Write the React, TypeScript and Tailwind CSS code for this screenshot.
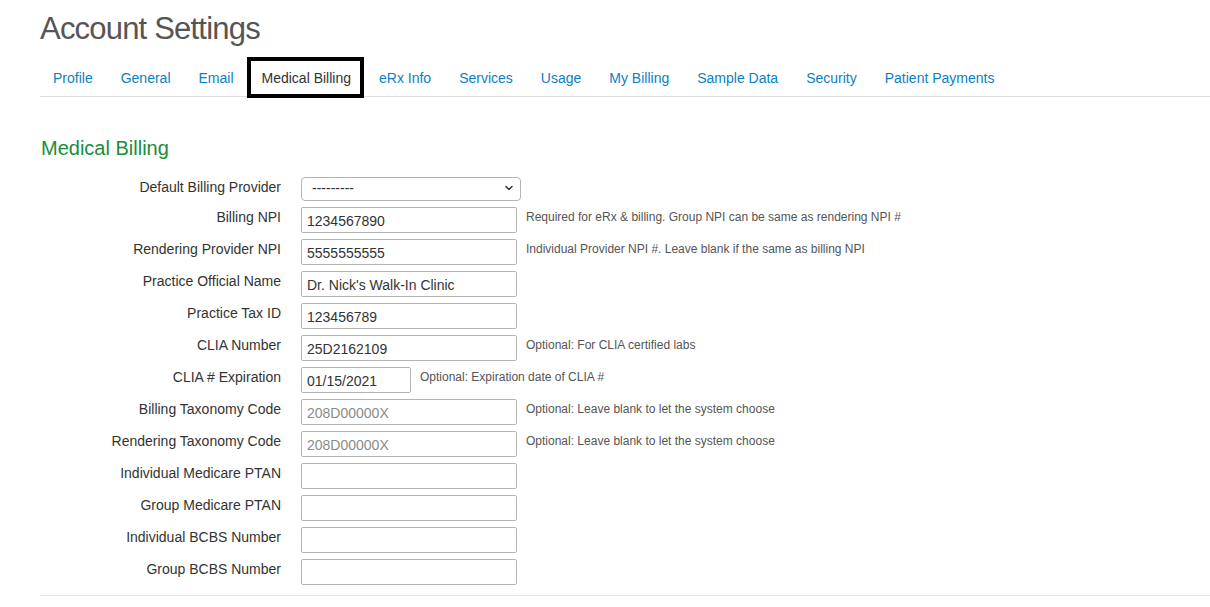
import { ChevronDown } from "lucide-react";

const tabs = [
  "Profile",
  "General",
  "Email",
  "Medical Billing",
  "eRx Info",
  "Services",
  "Usage",
  "My Billing",
  "Sample Data",
  "Security",
  "Patient Payments",
];

type Field = {
  label: string;
  value?: string;
  placeholder?: string;
  help?: string;
  narrow?: boolean;
};

const fields: Field[] = [
  {
    label: "Billing NPI",
    value: "1234567890",
    help: "Required for eRx & billing. Group NPI can be same as rendering NPI #",
  },
  {
    label: "Rendering Provider NPI",
    value: "5555555555",
    help: "Individual Provider NPI #. Leave blank if the same as billing NPI",
  },
  { label: "Practice Official Name", value: "Dr. Nick's Walk-In Clinic" },
  { label: "Practice Tax ID", value: "123456789" },
  { label: "CLIA Number", value: "25D2162109", help: "Optional: For CLIA certified labs" },
  {
    label: "CLIA # Expiration",
    value: "01/15/2021",
    help: "Optional: Expiration date of CLIA #",
    narrow: true,
  },
  {
    label: "Billing Taxonomy Code",
    placeholder: "208D00000X",
    help: "Optional: Leave blank to let the system choose",
  },
  {
    label: "Rendering Taxonomy Code",
    placeholder: "208D00000X",
    help: "Optional: Leave blank to let the system choose",
  },
  { label: "Individual Medicare PTAN" },
  { label: "Group Medicare PTAN" },
  { label: "Individual BCBS Number" },
  { label: "Group BCBS Number" },
];

const FormRow = ({ field }: { field: Field }) => (
  <div className="flex items-start h-[32px]">
    <label className="w-[241px] mr-[20px] text-right text-[14px] leading-[20px] text-[#333]">
      {field.label}
    </label>
    <input
      defaultValue={field.value}
      placeholder={field.placeholder}
      className={`${
        field.narrow ? "w-[110px]" : "w-[216px]"
      } h-[26px] border border-[#b4b4b4] rounded-[2px] px-[5px] pt-[1px] text-[14px] text-[#333] placeholder:text-[#8a8a8a] outline-none bg-white`}
    />
    {field.help && (
      <span className="ml-[9px] pt-[2px] text-[12px] leading-[17px] text-[#555]">
        {field.help}
      </span>
    )}
  </div>
);

export default function App() {
  return (
    <div className="min-h-screen bg-white pl-[40px] font-['Liberation_Sans',Arial,sans-serif]">
      <h1 className="pt-[13px] text-[31px] leading-[31px] tracking-[-0.8px] text-[#555] font-normal">
        Account Settings
      </h1>

      <ul className="mt-[13px] flex border-b border-[#dddddd] h-[40px]">
        {tabs.map((tab) =>
          tab === "Medical Billing" ? (
            <li
              key={tab}
              className="-ml-[2px] mr-[2px] h-[41px] pl-[11px] pr-[9px] pt-[2px] flex items-center border-4 border-black bg-white text-[14px] text-[#333]"
            >
              {tab}
            </li>
          ) : (
            <li
              key={tab}
              className="mr-[2px] h-[39px] px-[13px] pt-[4px] flex items-center text-[14px] text-[#0b7fc3]"
            >
              {tab}
            </li>
          )
        )}
      </ul>

      <h2 className="mt-[39px] ml-px text-[20px] leading-[24px] text-[#1a8c3b]">
        Medical Billing
      </h2>

      <div className="mt-[15px]">
        <div className="flex items-start h-[32px]">
          <label className="w-[241px] mr-[20px] pt-[2px] text-right text-[14px] leading-[20px] text-[#333]">
            Default Billing Provider
          </label>
          <div className="relative mt-px">
            <select className="appearance-none w-[220px] h-[24px] border border-[#b4b4b4] rounded-[4px] pl-[10px] text-[14px] text-[#333] bg-white outline-none">
              <option>---------</option>
            </select>
            <ChevronDown
              className="absolute right-[6px] top-[6px] w-[12px] h-[12px] text-[#333] pointer-events-none"
              strokeWidth={3}
            />
          </div>
        </div>
        {fields.map((f) => (
          <FormRow key={f.label} field={f} />
        ))}
      </div>

      <div className="mt-[4px] border-t border-[#e5e5e5]" />
    </div>
  );
}
